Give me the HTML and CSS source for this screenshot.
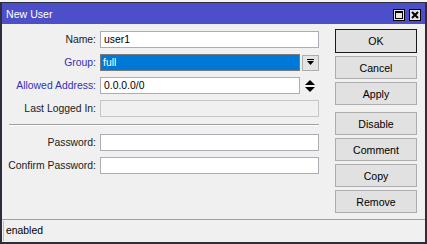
FILE: index.html
```html
<!DOCTYPE html>
<html lang="en">
  <head>
    <meta charset="UTF-8" />
    <meta name="viewport" content="width=device-width, initial-scale=1.0" />
    <title>New User</title>
    <link rel="stylesheet" href="styles.css">
  </head>
  <body>
    <div class="top-strip"></div>

    <div class="window">
      <div class="titlebar">
        <span class="title">New User</span>
        <div class="title-buttons">
          <span class="tb-button">
            <svg width="10" height="10" viewBox="0 0 10 10">
              <rect x="1.5" y="1.5" width="7" height="7" fill="none" stroke="#000" stroke-width="1"/>
              <rect x="1" y="1" width="8" height="2" fill="#000"/>
            </svg>
          </span>
          <span class="tb-button">
            <svg width="10" height="10" viewBox="0 0 10 10">
              <path d="M2 2 L8 8 M8 2 L2 8" stroke="#000" stroke-width="2"/>
            </svg>
          </span>
        </div>
      </div>

      <div class="content">
        <div class="form">
          <div class="row">
            <label>Name:</label>
            <div class="input">user1</div>
          </div>
          <div class="row">
            <label class="blue">Group:</label>
            <div class="input short selected">full</div>
            <span class="drop-button">
              <svg width="7" height="7" viewBox="0 0 7 7">
                <rect x="0" y="0" width="7" height="1" fill="#000"/>
                <path d="M0 2 L7 2 L3.5 6 Z" fill="#000"/>
              </svg>
            </span>
          </div>
          <div class="row">
            <label class="blue">Allowed Address:</label>
            <div class="input short">0.0.0.0/0</div>
            <span class="spinner">
              <svg width="10" height="12" viewBox="0 0 10 12">
                <path d="M0 5 L10 5 L5 0 Z" fill="#000"/>
                <path d="M0 7 L10 7 L5 12 Z" fill="#000"/>
              </svg>
            </span>
          </div>
          <div class="row">
            <label>Last Logged In:</label>
            <div class="input disabled"></div>
          </div>

          <div class="separator"></div>

          <div class="row">
            <label>Password:</label>
            <div class="input"></div>
          </div>
          <div class="row">
            <label>Confirm Password:</label>
            <div class="input"></div>
          </div>
        </div>

        <div class="buttons">
          <button class="default">OK</button>
          <button>Cancel</button>
          <button>Apply</button>
          <button class="spaced">Disable</button>
          <button>Comment</button>
          <button>Copy</button>
          <button>Remove</button>
        </div>
      </div>

      <div class="status">
        <div class="status-box">enabled</div>
      </div>
    </div>
  </body>
</html>
```

FILE: styles.css
```css
body {
  font-family: "Liberation Sans", Arial, sans-serif;
  font-size: 10.4px;
  margin: 0;
  padding: 0;
  background-color: #ffffff;
  color: #000;
  width: 427px;
  height: 244px;
  overflow: hidden;
}

.top-strip {
  height: 2px;
  background-color: #f4f4f4;
}

.window {
  width: 427px;
  height: 242px;
  box-sizing: border-box;
  display: flex;
  flex-direction: column;
  background-color: #f0f0f0;
  border: 2px solid #2e2e3a;
  border-top: 1px solid #2e2e3a;
}

.titlebar {
  height: 21px;
  display: flex;
  align-items: center;
  justify-content: space-between;
  background-color: #4c4fc9;
  color: #fff;
  padding: 0 4px 0 4px;
}

.title {
  font-size: 10.6px;
  padding-top: 1px;
}

.title-buttons {
  display: flex;
  gap: 4px;
  padding-top: 2px;
}

.tb-button {
  width: 12px;
  height: 12px;
  box-sizing: border-box;
  border: 1px solid #000;
  background-color: #e6e6e6;
  display: flex;
  align-items: center;
  justify-content: center;
}

.content {
  flex: 1;
  display: flex;
  gap: 16px;
  padding-top: 6px;
}

.form {
  width: 317px;
  padding-top: 1px;
  display: flex;
  flex-direction: column;
  gap: 6px;
}

.row {
  display: flex;
  align-items: center;
  height: 17px;
}

.row label {
  width: 94px;
  text-align: right;
  padding-right: 4px;
  color: #202020;
  flex-shrink: 0;
}

.row label.blue {
  color: #3030b8;
}

.input {
  width: 219px;
  height: 17px;
  box-sizing: border-box;
  border: 1px solid #aaadb4;
  background-color: #fff;
  padding-left: 3px;
  line-height: 15px;
}

.input.short {
  width: 200px;
}

.input.selected {
  background-color: #0078d7;
  color: #fff;
  border-color: #7a7a7a;
  padding-left: 2px;
}

.input.disabled {
  background-color: #f0f0f0;
  border-color: #c6c6c6;
}

.drop-button {
  width: 17px;
  height: 16px;
  box-sizing: border-box;
  margin-left: 2px;
  border: 1px solid #adadad;
  background-color: #e4e4e4;
  display: flex;
  align-items: center;
  justify-content: center;
}

.spinner {
  width: 19px;
  display: flex;
  justify-content: center;
  padding-left: 0;
}

.separator {
  height: 1px;
  margin: 1px 0 2px 7px;
  background-color: #a0a0a0;
  border-bottom: 1px solid #fff;
}

.buttons {
  display: flex;
  flex-direction: column;
  gap: 3px;
}

button {
  font-family: inherit;
  font-size: 10.6px;
  width: 82px;
  height: 23px;
  padding: 0;
  background-color: #e1e1e1;
  border: 1px solid #adadad;
  color: #000;
}

button.default {
  border: 1px solid #1a1a1a;
  height: 24px;
  margin-top: -1px;
}

button.spaced {
  margin-top: 4px;
}

.status {
  border-top: 1px solid #a0a0a0;
  padding: 1px 0 1px 1px;
}

.status-box {
  height: 20px;
  line-height: 19px;
  padding-left: 2px;
  border-left: 1px solid #c0c0c0;
}
```
